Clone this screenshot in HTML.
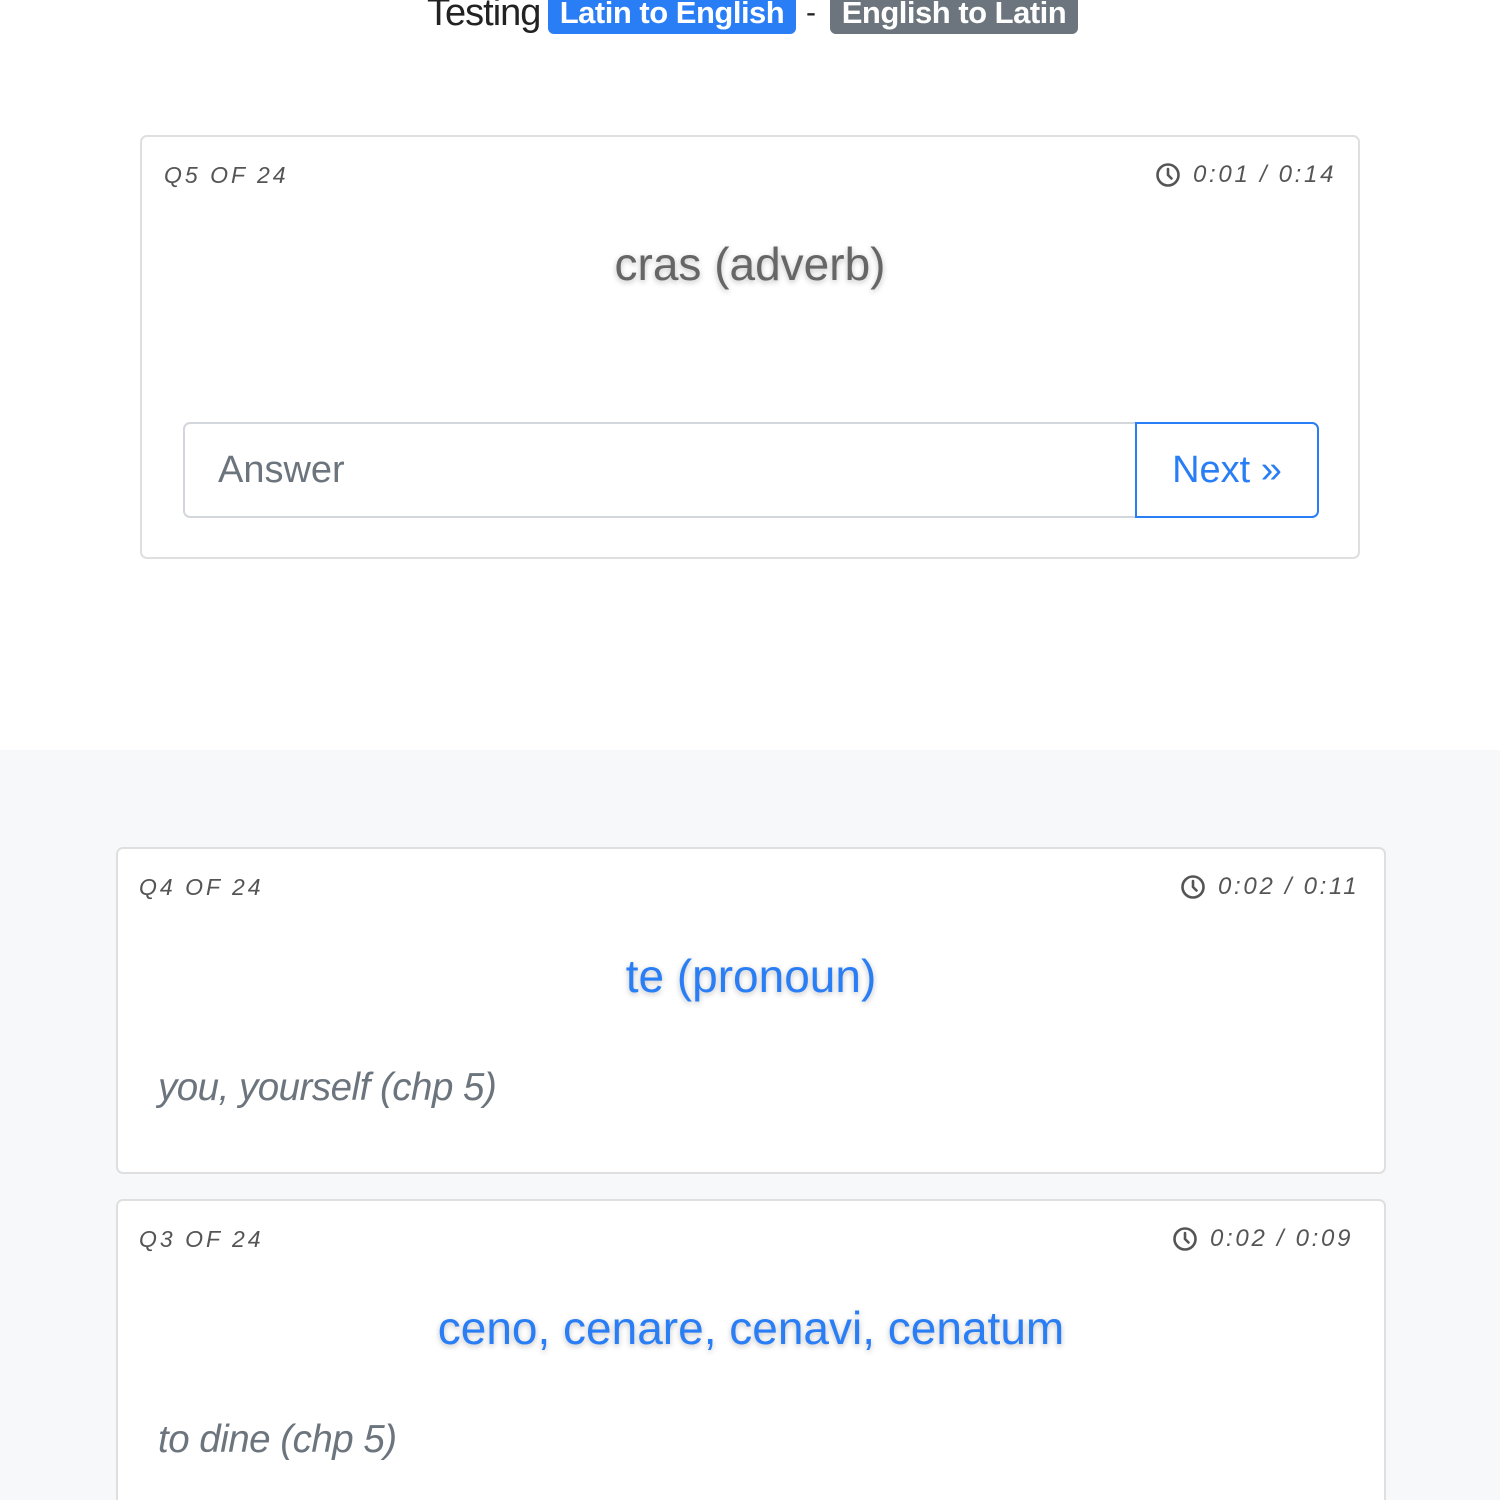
<!DOCTYPE html>
<html><head><meta charset="utf-8"><style>
*{box-sizing:border-box;margin:0;padding:0}
html,body{width:1500px;height:1500px;overflow:hidden;background:#fff;font-family:"Liberation Sans",Arial,sans-serif}
#wrap{position:relative;width:1500px;height:1500px;overflow:hidden}
.abs{position:absolute}
.badge{position:absolute;top:-12px;height:46px;border-radius:6px;color:#fff;font-weight:bold;font-size:31px;line-height:50px;text-align:center;letter-spacing:-0.5px;white-space:nowrap}
.card{position:absolute;background:#fff;border:2px solid #dfdfdf;border-radius:7px}
.hdr{position:absolute;font-style:italic;font-size:23px;letter-spacing:3px;color:#555;line-height:28px}
.tm{position:absolute;font-style:italic;font-size:24px;letter-spacing:2.7px;color:#555;line-height:28px;white-space:nowrap}
.tm svg{position:absolute;left:-38px;top:1px}
.title{position:absolute;left:0;right:0;text-align:center;font-size:46px;line-height:52px;text-shadow:0 2px 6px rgba(0,0,0,0.25)}
.ans{position:absolute;font-style:italic;font-size:38.5px;color:#6c757d;line-height:44px;letter-spacing:-0.5px}
</style></head><body><div id="wrap">
<div class="abs" style="left:427px;top:-10px;font-size:38px;line-height:46px;color:#222;letter-spacing:-1px">Testing</div>
<div class="badge" style="left:548px;width:248px;background:#2a7ef5">Latin to English</div>
<div class="abs" style="left:806px;top:-4px;font-size:30px;line-height:34px;color:#222">-</div>
<div class="badge" style="left:830px;width:248px;background:#6c757d">English to Latin</div>

<div class="card" style="left:140px;top:135px;width:1220px;height:424px">
  <div class="hdr" style="left:22px;top:24px">Q5 OF 24</div>
  <div class="tm" style="left:1051px;top:24px"><svg width="26" height="26" viewBox="0 0 26 26"><circle cx="13" cy="13" r="10.5" fill="none" stroke="#555" stroke-width="2.6"/><path d="M13 7v6l3.5 3.5" fill="none" stroke="#555" stroke-width="2.6" stroke-linecap="round"/></svg>0:01 / 0:14</div>
  <div class="title" style="top:101px;color:#666">cras (adverb)</div>
  <div class="abs" style="left:41px;top:285px;width:954px;height:96px;border:2px solid #d3d6da;border-right:none;border-radius:7px 0 0 7px;font-size:38px;color:#6c757d;padding-left:33px;line-height:92px">Answer</div>
  <div class="abs" style="left:993px;top:285px;width:184px;height:96px;border:2px solid #2a7ef5;border-radius:0 7px 7px 0;font-size:38px;color:#2a7ef5;text-align:center;line-height:92px">Next »</div>
</div>

<div class="abs" style="left:0;top:750px;width:1500px;height:750px;background:#f7f8fa"></div>

<div class="card" style="left:116px;top:847px;width:1270px;height:327px">
  <div class="hdr" style="left:21px;top:24px">Q4 OF 24</div>
  <div class="tm" style="left:1100px;top:24px"><svg width="26" height="26" viewBox="0 0 26 26"><circle cx="13" cy="13" r="10.5" fill="none" stroke="#555" stroke-width="2.6"/><path d="M13 7v6l3.5 3.5" fill="none" stroke="#555" stroke-width="2.6" stroke-linecap="round"/></svg>0:02 / 0:11</div>
  <div class="title" style="top:101px;color:#2a7ef5">te (pronoun)</div>
  <div class="ans" style="left:40px;top:217px">you, yourself (chp 5)</div>
</div>

<div class="card" style="left:116px;top:1199px;width:1270px;height:360px">
  <div class="hdr" style="left:21px;top:24px">Q3 OF 24</div>
  <div class="tm" style="left:1092px;top:24px"><svg width="26" height="26" viewBox="0 0 26 26"><circle cx="13" cy="13" r="10.5" fill="none" stroke="#555" stroke-width="2.6"/><path d="M13 7v6l3.5 3.5" fill="none" stroke="#555" stroke-width="2.6" stroke-linecap="round"/></svg>0:02 / 0:09</div>
  <div class="title" style="top:101px;color:#2a7ef5">ceno, cenare, cenavi, cenatum</div>
  <div class="ans" style="left:40px;top:217px">to dine (chp 5)</div>
</div>
</div></body></html>
